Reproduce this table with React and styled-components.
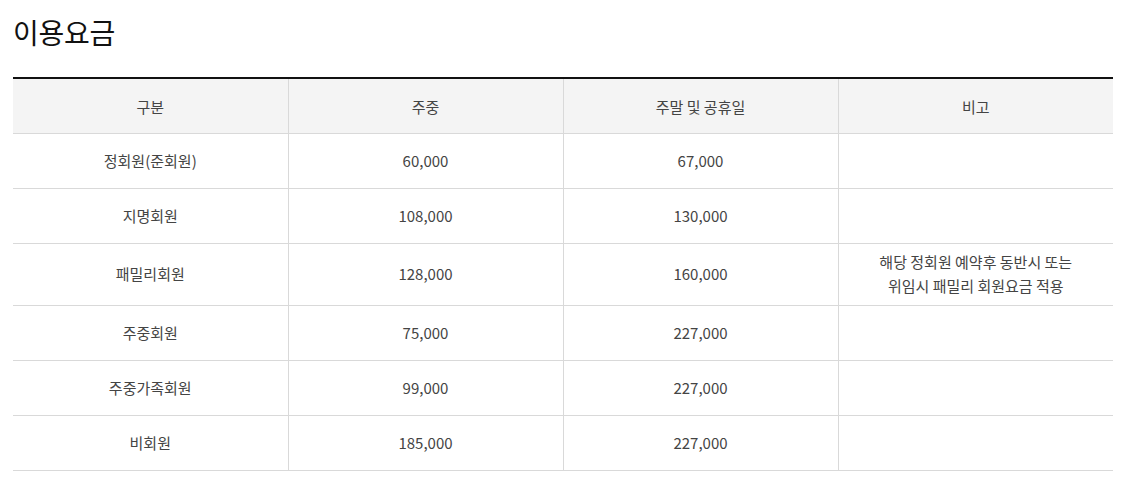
import React from 'react';
import styled, { createGlobalStyle } from 'styled-components';

const GlobalStyle = createGlobalStyle`
  body {
    margin: 0;
    background: #fff;
    font-family: "Noto Sans CJK KR", "Noto Sans", sans-serif;
  }
`;

const Wrapper = styled.div`
  padding: 12px 25px 0 13px;
`;

const Title = styled.h2`
  margin: 0 0 25px;
  font-size: 28px;
  font-weight: 400;
  line-height: 40px;
  color: #111;
  letter-spacing: -0.3px;
`;

const Table = styled.table`
  width: 1100px;
  border-collapse: collapse;
  table-layout: fixed;
  border-top: 2px solid #111;
  font-size: 15px;
  color: #444;
`;

const Th = styled.th`
  height: 54px;
  padding: 0;
  background: #f4f4f4;
  font-weight: 400;
  text-align: center;
  border-bottom: 1px solid #d9d9d9;
  border-left: 1px solid #d9d9d9;
  &:first-child {
    border-left: 0;
  }
`;

const Td = styled.td`
  height: 55px;
  padding: 6px 0 7px;
  box-sizing: border-box;
  line-height: 24px;
  text-align: center;
  border-bottom: 1px solid #d9d9d9;
  border-left: 1px solid #d9d9d9;
  &:first-child {
    border-left: 0;
  }
`;

const rows = [
  ['정회원(준회원)', '60,000', '67,000', ''],
  ['지명회원', '108,000', '130,000', ''],
  ['패밀리회원', '128,000', '160,000', ['해당 정회원 예약후 동반시 또는', '위임시 패밀리 회원요금 적용']],
  ['주중회원', '75,000', '227,000', ''],
  ['주중가족회원', '99,000', '227,000', ''],
  ['비회원', '185,000', '227,000', ''],
];

export default function App() {
  return (
    <Wrapper>
      <GlobalStyle />
      <Title>이용요금</Title>
      <Table>
        <thead>
          <tr>
            <Th>구분</Th>
            <Th>주중</Th>
            <Th>주말 및 공휴일</Th>
            <Th>비고</Th>
          </tr>
        </thead>
        <tbody>
          {rows.map((r) => (
            <tr key={r[0]}>
              <Td>{r[0]}</Td>
              <Td>{r[1]}</Td>
              <Td>{r[2]}</Td>
              <Td>
                {Array.isArray(r[3])
                  ? r[3].map((line, i) => <div key={i}>{line}</div>)
                  : r[3]}
              </Td>
            </tr>
          ))}
        </tbody>
      </Table>
    </Wrapper>
  );
}
